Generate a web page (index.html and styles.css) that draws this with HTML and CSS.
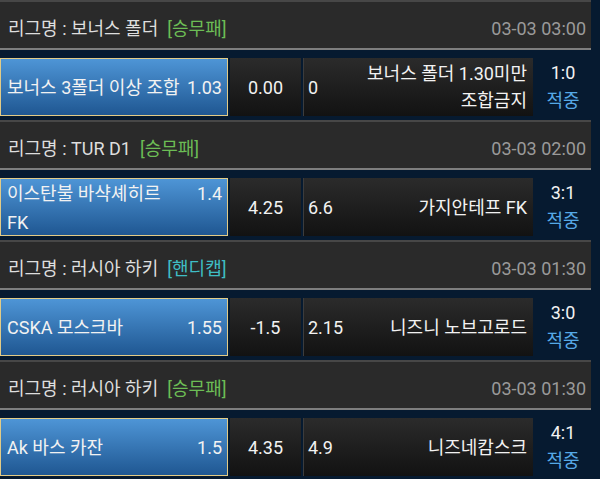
FILE: index.html
```html
<!DOCTYPE html>
<html lang="ko">
<head>
<meta charset="utf-8">
<link rel="stylesheet" href="styles.css">
</head>
<body>
<div class="list">
  <section class="block">
    <div class="league">
      <span class="name">리그명 : 보너스 폴더<span class="tag win">[승무패]</span></span>
      <span class="date">03-03 03:00</span>
    </div>
    <div class="row">
      <div class="home"><span class="team">보너스 3폴더 이상 조합</span><span class="odds">1.03</span></div>
      <div class="mid">0.00</div>
      <div class="away"><span class="odds">0</span><span class="team">보너스 폴더 1.30미만<br>조합금지</span></div>
      <div class="result"><span class="score">1:0</span><span class="hit">적중</span></div>
    </div>
  </section>
  <section class="block">
    <div class="league">
      <span class="name">리그명 : TUR D1<span class="tag win">[승무패]</span></span>
      <span class="date">03-03 02:00</span>
    </div>
    <div class="row">
      <div class="home top"><span class="team">이스탄불 바샥셰히르<br>FK</span><span class="odds">1.4</span></div>
      <div class="mid">4.25</div>
      <div class="away"><span class="odds">6.6</span><span class="team">가지안테프 FK</span></div>
      <div class="result"><span class="score">3:1</span><span class="hit">적중</span></div>
    </div>
  </section>
  <section class="block">
    <div class="league">
      <span class="name">리그명 : 러시아 하키<span class="tag handi">[핸디캡]</span></span>
      <span class="date">03-03 01:30</span>
    </div>
    <div class="row">
      <div class="home"><span class="team">CSKA 모스크바</span><span class="odds">1.55</span></div>
      <div class="mid">-1.5</div>
      <div class="away"><span class="odds">2.15</span><span class="team">니즈니 노브고로드</span></div>
      <div class="result"><span class="score">3:0</span><span class="hit">적중</span></div>
    </div>
  </section>
  <section class="block">
    <div class="league">
      <span class="name">리그명 : 러시아 하키<span class="tag win">[승무패]</span></span>
      <span class="date">03-03 01:30</span>
    </div>
    <div class="row">
      <div class="home"><span class="team">Ak 바스 카잔</span><span class="odds">1.5</span></div>
      <div class="mid">4.35</div>
      <div class="away"><span class="odds">4.9</span><span class="team">니즈네캄스크</span></div>
      <div class="result"><span class="score">4:1</span><span class="hit">적중</span></div>
    </div>
  </section>
</div>
</body>
</html>
```

FILE: styles.css
```css
* { box-sizing: border-box; }
html, body {
  margin: 0;
  padding: 0;
  background: #061a30;
}
body {
  width: 600px;
  height: 479px;
  overflow: hidden;
  font-family: Roboto, "Noto Sans CJK KR", sans-serif;
  font-size: 18px;
  color: #f2f2f2;
}
.list {
  width: 591px;
  display: flex;
  flex-direction: column;
}
.block {
  display: flex;
  flex-direction: column;
}
.league {
  height: 50px;
  background: #2a2a2a;
  border-top: 2px solid #474747;
  border-bottom: 2px solid #7e7e7e;
  padding: 8px 5px 0 8px;
  display: flex;
  align-items: center;
  justify-content: space-between;
  color: #dedede;
  line-height: 24px;
}
.tag { margin-left: 9px; }
.tag.win { color: #6cbd55; }
.tag.handi { color: #3fbdc4; }
.date {
  color: #9a9a9a;
}
.row {
  height: 70px;
  padding: 8px 0 4px;
  display: flex;
  line-height: 27px;
}
.home {
  width: 228px;
  flex: none;
  border: 1.5px solid #e2cb86;
  background: linear-gradient(#4e95d6, #1f5792);
  display: flex;
  align-items: center;
  justify-content: space-between;
  gap: 6px;
  padding: 0 5px 0 6px;
}
.home.top { align-items: flex-start; padding-top: 0; line-height: 29px; }
.home .team { flex: 1; }
.mid {
  width: 71px;
  flex: none;
  margin-left: 2px;
  background: linear-gradient(#2b2b2b, #121212);
  display: flex;
  align-items: center;
  justify-content: center;
}
.away {
  width: 230px;
  flex: none;
  margin-left: 2px;
  border-left: 1px solid #3c3c3c;
  background: linear-gradient(#2b2b2b, #121212);
  display: flex;
  align-items: center;
  justify-content: space-between;
  gap: 8px;
  padding: 0 6px 0 4px;
}
.away .team {
  flex: 1;
  text-align: right;
}
.result {
  width: 60px;
  flex: none;
  display: flex;
  flex-direction: column;
  align-items: center;
  justify-content: center;
  line-height: 28px;
}
.hit { color: #56a9e6; }
```
